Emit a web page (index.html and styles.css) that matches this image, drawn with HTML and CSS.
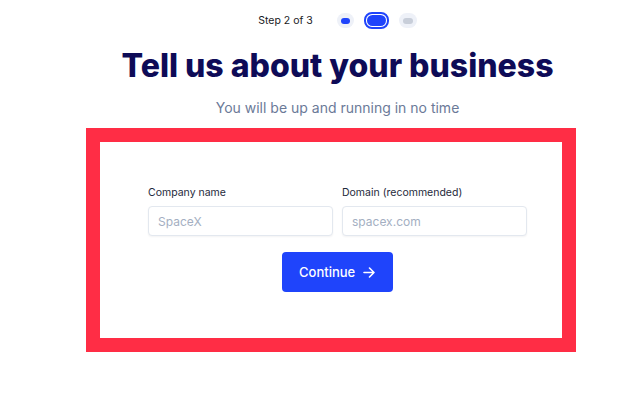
FILE: index.html
```html
<!DOCTYPE html>
<html lang="en">
<head>
  <meta charset="UTF-8">
  <title>Onboarding - Step 2</title>
  <link rel="stylesheet" href="styles.css">
</head>
<body>
  <section class="page">
    <div class="steps">
      <span class="steps-label">Step 2 of 3</span>
      <div class="steps-dots">
        <span class="dot dot-done"><span></span></span>
        <span class="dot dot-current"><span></span></span>
        <span class="dot dot-next"><span></span></span>
      </div>
    </div>

    <h1 class="title">Tell us about your business</h1>
    <p class="subtitle">You will be up and running in no time</p>

    <form class="card" id="businessForm">
      <div class="fields">
        <div class="field">
          <label for="company">Company name</label>
          <input type="text" id="company" name="company" placeholder="SpaceX">
        </div>
        <div class="field">
          <label for="domain">Domain (recommended)</label>
          <input type="text" id="domain" name="domain" placeholder="spacex.com">
        </div>
      </div>
      <button type="submit" class="btn-continue">
        Continue
        <svg width="12" height="11" viewBox="0 0 12 11" fill="none" stroke="currentColor" stroke-width="1.6" stroke-linecap="round" stroke-linejoin="round">
          <path d="M1 5.5h10M6.5 1l4.5 4.5L6.5 10"/>
        </svg>
      </button>
    </form>
  </section>
</body>
</html>
```

FILE: styles.css
```css
/* Page */
body {
    margin: 0;
    background-color: #ffffff;
    font-family: "Inter", "Liberation Sans", sans-serif;
}

.page {
    padding-left: 40px;
}

/* Step indicator */
.steps {
    display: flex;
    justify-content: center;
    align-items: center;
    height: 17px;
    margin-top: 12px;
    gap: 24px;
}

.steps-label {
    font-size: 10.5px;
    color: #1a1a24;
}

.steps-dots {
    display: flex;
    align-items: center;
    gap: 10px;
}

.dot {
    display: flex;
    align-items: center;
    justify-content: center;
    width: 17px;
    height: 15px;
    border-radius: 8px;
    background-color: #eef1f8;
}

.dot span {
    width: 9px;
    height: 6px;
    border-radius: 3px;
}

.dot-done span {
    background-color: #1f44fb;
}

.dot-next {
    width: 18px;
}

.dot-next span {
    width: 10px;
    background-color: #c8ced9;
}

.dot-current {
    width: 25px;
    height: 17px;
    box-sizing: border-box;
    border: 2px solid #1f44fb;
    background-color: #ffffff;
}

.dot-current span {
    width: 19px;
    height: 11px;
    border-radius: 6px;
    background-color: #1f44fb;
}

/* Headings */
.title {
    margin: 18px 0 0;
    text-align: center;
    font-size: 32px;
    line-height: 38px;
    font-weight: 800;
    color: #0e0b57;
}

.subtitle {
    margin: 13px 0 0;
    text-align: center;
    font-size: 14px;
    line-height: 20px;
    color: #6b7a98;
}

/* Form card */
.card {
    width: 490px;
    margin: 10px 0 0 46px;
    padding: 44px 34px 46px 48px;
    box-sizing: border-box;
    border: 14px solid #ff2d45;
    background-color: #ffffff;
}

.fields {
    display: grid;
    grid-template-columns: 185px 185px;
    gap: 9px;
}

.field label {
    display: block;
    margin-bottom: 6px;
    font-size: 10.5px;
    line-height: 14px;
    font-weight: 400;
    color: #1e293b;
}

.field input {
    width: 100%;
    height: 30px;
    padding: 0 9px;
    box-sizing: border-box;
    border: 1px solid #e3e8ef;
    border-radius: 4px;
    box-shadow: 0 1px 2px rgba(15, 23, 42, 0.05);
    font-family: inherit;
    font-size: 12px;
    color: #1e293b;
}

.field input::placeholder {
    color: #a4afc2;
}

/* Button */
.btn-continue {
    display: flex;
    align-items: center;
    gap: 8px;
    height: 40px;
    margin: 16px 0 0 134px;
    padding: 0 18px 0 17px;
    border: none;
    border-radius: 4px;
    background-color: #1f44fb;
    color: #ffffff;
    font-family: inherit;
    font-size: 13px;
    font-weight: 500;
    cursor: pointer;
}
```
